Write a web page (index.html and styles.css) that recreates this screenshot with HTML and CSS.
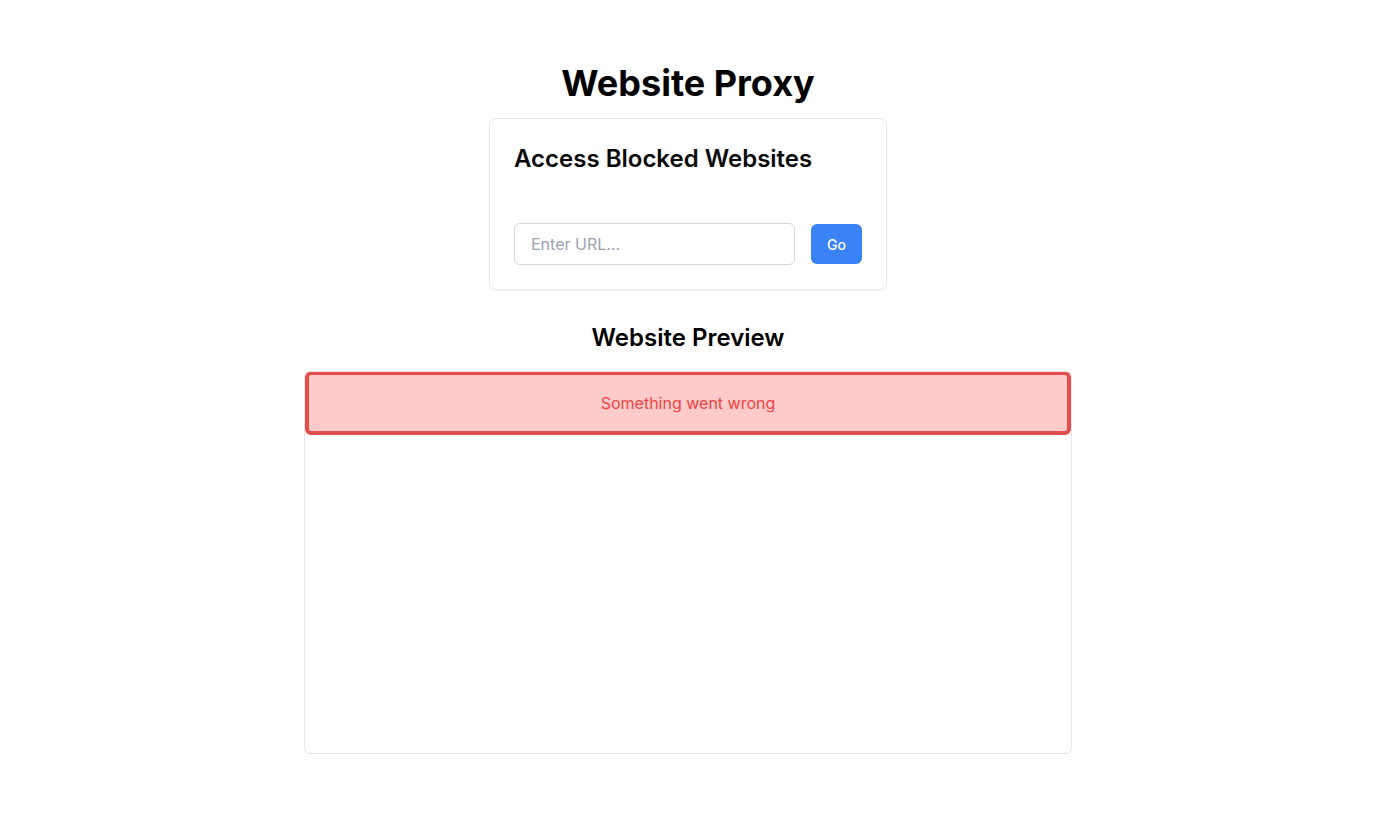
FILE: index.html
```html
<!DOCTYPE html>
<html lang="en">
<head>
<meta charset="utf-8">
<title>Website Proxy</title>
<link rel="stylesheet" href="styles.css">
</head>
<body>
<main class="page">
  <h1 class="title">Website Proxy</h1>
  <section class="card">
    <h2 class="card-title">Access Blocked Websites</h2>
    <form class="url-row">
      <input class="url-input" type="text" placeholder="Enter URL...">
      <button class="go-btn" type="button">Go</button>
    </form>
  </section>
  <h2 class="preview-title">Website Preview</h2>
  <section class="preview">
    <div class="error">Something went wrong</div>
  </section>
</main>
</body>
</html>
```
FILE: styles.css
```css
* { box-sizing: border-box; }
html, body { margin: 0; padding: 0; background: #ffffff; }
body {
  font-family: Inter, "Noto Sans", sans-serif;
  color: #0a0a0a;
}
.page {
  display: flex;
  flex-direction: column;
  align-items: center;
  padding-top: 63px;
}
.title {
  margin: 0 0 15px;
  font-size: 36px;
  line-height: 40px;
  font-weight: 700;
  color: #000;
}
.card {
  width: 398px;
  border: 1px solid #e5e7eb;
  border-radius: 6px;
  padding: 24px;
  box-shadow: 0 1px 2px rgba(0,0,0,0.04);
}
.card-title {
  margin: 0 0 48px;
  font-size: 24px;
  line-height: 32px;
  font-weight: 600;
  color: #0a0a0a;
}
.url-row {
  display: flex;
  align-items: center;
  gap: 16px;
  margin: 0;
}
.url-input {
  flex: 1;
  min-width: 0;
  height: 42px;
  border: 1px solid #d1d5db;
  border-radius: 6px;
  padding: 8px 16px;
  font-family: inherit;
  font-size: 16px;
  line-height: 24px;
  color: #111827;
  background: #fff;
  outline: none;
}
.url-input::placeholder { color: #9ca3af; }
.go-btn {
  height: 40px;
  padding: 0 16px;
  border: none;
  border-radius: 6px;
  background: #3b82f6;
  color: #fff;
  font-family: inherit;
  font-size: 14px;
  font-weight: 500;
  cursor: pointer;
}
.preview-title {
  margin: 32px 0 17px;
  font-size: 24px;
  line-height: 32px;
  font-weight: 600;
  color: #000;
}
.preview {
  width: 768px;
  height: 383px;
  border: 1px solid #e5e7eb;
  border-radius: 6px;
  overflow: hidden;
}
.error {
  margin: 0 0 0;
  margin-top: -1px;
  border: 4px solid #e24d4d;
  border-radius: 6px;
  background: #fecaca;
  color: #ef4444;
  padding: 16px;
  text-align: center;
  font-size: 16px;
  line-height: 24px;
}
```
